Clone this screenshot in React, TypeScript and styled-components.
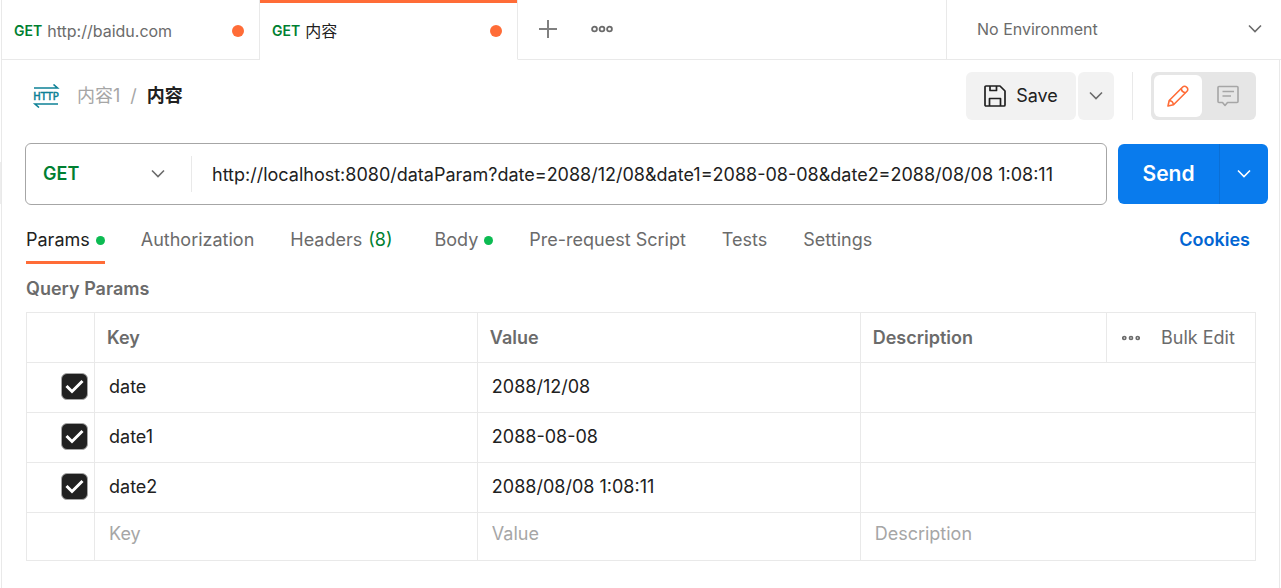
import React, { useState } from "react";
import styled, { createGlobalStyle } from "styled-components";

const line = "#e9e9e9";
const grey = "#6b6b6b";
const muted = "#a6a6a6";
const ink = "#212121";
const orange = "#ff6c37";
const green = "#007f31";
const fontStack = `Inter, "Noto Sans CJK SC", sans-serif`;

const GlobalStyle = createGlobalStyle`
  *, *::before, *::after { box-sizing: border-box; }
  body { margin: 0; background: #fff; color: ${ink}; font: 400 18px/24px ${fontStack}; }
  button, input, select { font: inherit; color: inherit; margin: 0; }
  button { border: 0; padding: 0; background: none; cursor: pointer; }
  svg { display: block; flex: none; }
`;

const Shell = styled.div`
  display: flex;
  min-height: 100vh;
`;

const Rail = styled.div`
  flex: none;
  width: 1px;
  padding-top: 162px;
`;

const RailThumb = styled.div`
  height: 42px;
  background: #ededed;
`;

const Workspace = styled.div`
  flex: 1;
  min-width: 0;
  display: flex;
  flex-direction: column;
  border-left: 1px solid ${line};
`;

const TabBar = styled.header`
  display: flex;
  height: 60px;
`;

const FileTab = styled.button<{ $active?: boolean }>`
  display: flex;
  align-items: center;
  gap: 5px;
  flex: none;
  width: 258px;
  padding: 2px 15px 0 12px;
  font-size: 16px;
  text-align: left;
  color: ${(p) => (p.$active ? ink : grey)};
  border-right: 1px solid ${line};
  border-bottom: 1px solid ${(p) => (p.$active ? "#fff" : line)};
  box-shadow: ${(p) => (p.$active ? `inset 0 3px 0 ${orange}` : "none")};
`;

const TabMethod = styled.span`
  font-size: 14px;
  font-weight: 600;
  color: ${green};
`;

const TabTitle = styled.span`
  flex: 1;
`;

const UnsavedDot = styled.span`
  width: 12px;
  height: 12px;
  border-radius: 50%;
  background: ${orange};
`;

const TabActions = styled.div`
  flex: 1;
  display: flex;
  align-items: center;
  gap: 34px;
  padding: 0 0 2px 21px;
  border-bottom: 1px solid ${line};
  color: ${grey};
`;

const SelectWrap = styled.label`
  display: grid;
  align-items: center;
  > * { grid-area: 1 / 1; }
  > svg { justify-self: end; pointer-events: none; }
`;

const PlainSelect = styled.select`
  width: 100%;
  height: 100%;
  border: 0;
  outline: 0;
  appearance: none;
  background: transparent;
`;

const Environment = styled(SelectWrap)`
  flex: none;
  width: 335px;
  padding: 0 19px 2px 30px;
  border-left: 1px solid ${line};
  border-bottom: 1px solid ${line};
  font-size: 16px;
  color: ${grey};
`;

const Request = styled.main`
  flex: 1;
  margin-right: 1px;
  border-right: 1px solid ${line};
`;

const TitleRow = styled.div`
  display: flex;
  align-items: center;
  padding: 12px 23px 0 30px;
`;

const Crumbs = styled.nav`
  flex: 1;
  display: flex;
  align-items: center;
  gap: 10px;
  padding-left: 17px;
  color: ${muted};
`;

const CrumbLink = styled.a`
  color: ${muted};
  text-decoration: none;
`;

const CrumbCurrent = styled.strong`
  font-weight: 700;
  color: ${ink};
`;

const SoftButton = styled.button<{ $w: number }>`
  display: flex;
  align-items: center;
  justify-content: center;
  gap: 10px;
  width: ${(p) => p.$w}px;
  height: 48px;
  margin-right: 2px;
  border-radius: 6px;
  background: #f2f2f2;
`;

const Divider = styled.span`
  width: 1px;
  height: 48px;
  margin: 0 18px 0 16px;
  background: ${line};
`;

const ModeSwitch = styled.div`
  display: flex;
  padding: 3px;
  border-radius: 6px;
  background: #e6e6e6;
`;

const ModeButton = styled.button<{ $on?: boolean }>`
  display: flex;
  align-items: center;
  justify-content: center;
  width: ${(p) => (p.$on ? 48 : 51)}px;
  height: 42px;
  border-radius: 6px;
  color: ${(p) => (p.$on ? orange : muted)};
  background: ${(p) => (p.$on ? "#fff" : "transparent")};
`;

const UrlRow = styled.form`
  display: flex;
  align-items: center;
  gap: 11px;
  padding: 23px 11px 0 23px;
`;

const UrlBox = styled.div`
  flex: 1;
  display: flex;
  align-items: center;
  height: 62px;
  border: 1px solid ${muted};
  border-radius: 6px;
`;

const MethodSelect = styled(SelectWrap)`
  width: 166px;
  height: 36px;
  padding: 0 26px 0 17px;
  border-right: 1px solid ${line};
  font-weight: 600;
  color: ${green};
`;

const UrlInput = styled.input`
  flex: 1;
  min-width: 0;
  height: 100%;
  padding: 0 20px;
  border: 0;
  outline: 0;
  background: transparent;
`;

const SendGroup = styled.div`
  display: flex;
  height: 60px;
  overflow: hidden;
  border-radius: 6px;
  background: #097bed;
  color: #fff;
`;

const SendButton = styled.button`
  width: 101px;
  font-size: 21px;
  font-weight: 600;
`;

const SendMore = styled.button`
  display: flex;
  align-items: center;
  justify-content: center;
  width: 49px;
  border-left: 1px solid #0a6fd6;
`;

const Sections = styled.div`
  display: flex;
  align-items: flex-start;
  gap: 36px;
  padding: 23px 29px 0 24px;
`;

const SectionTab = styled.button<{ $active?: boolean }>`
  display: flex;
  align-items: center;
  gap: 6px;
  height: 36px;
  padding-bottom: 12px;
  color: ${(p) => (p.$active ? ink : grey)};
  box-shadow: ${(p) => (p.$active ? `inset 0 -3px 0 ${orange}` : "none")};
`;

const Count = styled.span`
  padding-right: 6px;
  color: ${green};
`;

const StatusDot = styled.span`
  width: 9px;
  height: 9px;
  border-radius: 50%;
  background: #0cbb52;
`;

const CookiesLink = styled.a`
  margin-left: auto;
  font-weight: 600;
  color: #0265d2;
  text-decoration: none;
`;

const Heading = styled.h2`
  margin: 0;
  padding: 13px 24px 11px;
  font-size: 18px;
  font-weight: 600;
  line-height: 24px;
  color: ${grey};
`;

const TableWrap = styled.div`
  padding: 0 23px 0 24px;
`;

const Table = styled.table`
  width: 100%;
  table-layout: fixed;
  border-collapse: collapse;
`;

const Col = styled.col<{ $w?: string }>`
  width: ${(p) => p.$w ?? "auto"};
`;

const Th = styled.th`
  height: 50px;
  padding: 0 12px;
  border: 1px solid ${line};
  font-weight: 600;
  text-align: left;
  color: ${grey};
`;

const Td = styled.td`
  height: 50px;
  padding: 0 0 2px;
  border: 1px solid ${line};
`;

const BlankTd = styled(Td)`
  height: 48px;
  padding-bottom: 6px;
`;

const CellInput = styled.input`
  display: block;
  width: 100%;
  height: 24px;
  padding: 0 14px;
  border: 0;
  outline: 0;
  background: transparent;
  &::placeholder { color: ${muted}; opacity: 1; }
`;

const HeadActions = styled.div`
  display: flex;
  align-items: center;
  gap: 21px;
  padding-left: 3px;
  font-weight: 400;
  white-space: nowrap;
`;

const CheckLabel = styled.label`
  display: grid;
  place-items: center;
  width: 27px;
  margin: 0 6px 0 auto;
  > * { grid-area: 1 / 1; }
  > svg { pointer-events: none; }
`;

const CheckInput = styled.input`
  appearance: none;
  width: 27px;
  height: 27px;
  border: 1px solid ${muted};
  border-radius: 6px;
  background: #fff;
  &:checked { background: ${ink}; }
`;

const Chevron = ({ color = grey }: { color?: string }) => (
  <svg width="14" height="10" viewBox="0 0 14 10" fill="none" stroke={color} strokeWidth="1.6">
    <path d="M1 1.5 7 7.5 13 1.5" />
  </svg>
);

const Dots = () => (
  <svg width="22" height="8" viewBox="0 0 22 8" fill="none" stroke={grey} strokeWidth="1.8">
    <circle cx="3.500" cy="4" r="2.400" />
    <circle cx="11" cy="4" r="2.400" />
    <circle cx="18.500" cy="4" r="2.400" />
  </svg>
);

const SmallDots = () => (
  <svg width="18" height="6" viewBox="0 0 18 6" fill="none" stroke={grey} strokeWidth="1.7">
    <circle cx="2.300" cy="3" r="1.500" />
    <circle cx="9" cy="3" r="1.500" />
    <circle cx="15.700" cy="3" r="1.500" />
  </svg>
);

const PlusIcon = () => (
  <svg width="18" height="18" viewBox="0 0 18 18" stroke="#808080" strokeWidth="2">
    <path d="M9 0v18M0 9h18" />
  </svg>
);

const HttpIcon = () => (
  <svg width="28" height="24" viewBox="0 0 28 24" fill="none" stroke="#0e8196" strokeWidth="1.6">
    <path d="M2 4h23.500L21.500 .5" />
    <path d="M26 20H3l4 3.500" />
    <text
      x="14"
      y="16"
      textAnchor="middle"
      fontFamily="DejaVu Sans Condensed, DejaVu Sans, sans-serif"
      fontSize="11"
      fill="#0e8196"
      strokeWidth="0.5"
    >
      HTTP
    </text>
  </svg>
);

const SaveIcon = () => (
  <svg width="22" height="22" viewBox="0 0 22 22" fill="none" stroke={ink} strokeWidth="1.7" strokeLinejoin="round">
    <path d="M1 2a1 1 0 0 1 1-1h14l5 5v14a1 1 0 0 1-1 1H2a1 1 0 0 1-1-1z" />
    <path d="M6 1v4.500h6.500V1" />
    <path d="M5.500 21v-7.500h11V21" />
  </svg>
);

const PencilIcon = () => (
  <svg width="22" height="22" viewBox="0 0 22 22" fill="none" stroke="currentColor" strokeWidth="1.6" strokeLinejoin="round">
    <path d="M1 21 2.200 15.500 15.700 2a2.600 2.600 0 0 1 3.700 0l.6.6a2.600 2.600 0 0 1 0 3.700L6.500 19.800z" />
    <path d="M14.300 3.400c.2 2.700 1.600 4.100 4.300 4.300M2.200 15.500c2.300.3 4 2 4.300 4.300" />
  </svg>
);

const CommentIcon = () => (
  <svg width="22" height="22" viewBox="0 0 22 22" fill="none" stroke="currentColor" strokeWidth="1.6" strokeLinejoin="round">
    <path d="M2 1.500h18a1 1 0 0 1 1 1v14a1 1 0 0 1-1 1h-9.500L8 20.500l-2.500-3H2a1 1 0 0 1-1-1v-14a1 1 0 0 1 1-1z" />
    <path d="M5.500 6.500h11.500M5.500 11h8.500" />
  </svg>
);

const TickIcon = () => (
  <svg width="19" height="15" viewBox="0 0 19 15" fill="none" stroke="#fff" strokeWidth="3">
    <path d="M1.500 7 7 12.500 17.500 2" />
  </svg>
);

const rows = [
  { key: "date", value: "2088/12/08" },
  { key: "date1", value: "2088-08-08" },
  { key: "date2", value: "2088/08/08 1:08:11" },
];

function ParamRow({ name, value }: { name: string; value: string }) {
  const [checked, setChecked] = useState(true);
  return (
    <tr>
      <Td>
        <CheckLabel>
          <CheckInput
            type="checkbox"
            aria-label={`Use ${name}`}
            checked={checked}
            onChange={(e) => setChecked(e.target.checked)}
          />
          {checked && <TickIcon />}
        </CheckLabel>
      </Td>
      <Td><CellInput aria-label="Key" defaultValue={name} /></Td>
      <Td><CellInput aria-label="Value" defaultValue={value} /></Td>
      <Td colSpan={2}><CellInput aria-label="Description" /></Td>
    </tr>
  );
}

export default function App() {
  return (
    <>
      <GlobalStyle />
      <Shell>
        <Rail><RailThumb /></Rail>
        <Workspace>
          <TabBar>
            <FileTab>
              <TabMethod>GET</TabMethod>
              <TabTitle>http://baidu.com</TabTitle>
              <UnsavedDot />
            </FileTab>
            <FileTab $active>
              <TabMethod>GET</TabMethod>
              <TabTitle>内容</TabTitle>
              <UnsavedDot />
            </FileTab>
            <TabActions>
              <button aria-label="New tab"><PlusIcon /></button>
              <button aria-label="Tab options"><Dots /></button>
            </TabActions>
            <Environment>
              <PlainSelect aria-label="Environment">
                <option>No Environment</option>
              </PlainSelect>
              <Chevron />
            </Environment>
          </TabBar>

          <Request>
            <TitleRow>
              <HttpIcon />
              <Crumbs aria-label="Breadcrumb">
                <CrumbLink href="#collection">内容1</CrumbLink>
                <span>/</span>
                <CrumbCurrent>内容</CrumbCurrent>
              </Crumbs>
              <SoftButton $w={110}><SaveIcon />Save</SoftButton>
              <SoftButton $w={36} aria-label="Save options"><Chevron /></SoftButton>
              <Divider />
              <ModeSwitch>
                <ModeButton $on aria-label="Edit"><PencilIcon /></ModeButton>
                <ModeButton aria-label="Comments"><CommentIcon /></ModeButton>
              </ModeSwitch>
            </TitleRow>

            <UrlRow onSubmit={(e) => e.preventDefault()}>
              <UrlBox>
                <MethodSelect>
                  <PlainSelect aria-label="Method">
                    <option>GET</option>
                  </PlainSelect>
                  <Chevron />
                </MethodSelect>
                <UrlInput
                  aria-label="Request URL"
                  defaultValue="http://localhost:8080/dataParam?date=2088/12/08&date1=2088-08-08&date2=2088/08/08 1:08:11"
                />
              </UrlBox>
              <SendGroup>
                <SendButton type="submit">Send</SendButton>
                <SendMore type="button" aria-label="Send options"><Chevron color="#fff" /></SendMore>
              </SendGroup>
            </UrlRow>

            <Sections>
              <SectionTab $active>Params<StatusDot /></SectionTab>
              <SectionTab>Authorization</SectionTab>
              <SectionTab>Headers <Count>(8)</Count></SectionTab>
              <SectionTab>Body<StatusDot /></SectionTab>
              <SectionTab>Pre-request Script</SectionTab>
              <SectionTab>Tests</SectionTab>
              <SectionTab>Settings</SectionTab>
              <CookiesLink href="#cookies">Cookies</CookiesLink>
            </Sections>

            <Heading>Query Params</Heading>
            <TableWrap>
              <Table>
                <colgroup>
                  <Col $w="68px" />
                  <Col $w="31.15%" />
                  <Col $w="31.15%" />
                  <Col />
                  <Col $w="149px" />
                </colgroup>
                <thead>
                  <tr>
                    <Th aria-label="Enabled" />
                    <Th>Key</Th>
                    <Th>Value</Th>
                    <Th>Description</Th>
                    <Th>
                      <HeadActions>
                        <button aria-label="Table options"><SmallDots /></button>
                        <button>Bulk Edit</button>
                      </HeadActions>
                    </Th>
                  </tr>
                </thead>
                <tbody>
                  {rows.map((r) => (
                    <ParamRow key={r.key} name={r.key} value={r.value} />
                  ))}
                  <tr>
                    <BlankTd />
                    <BlankTd><CellInput aria-label="New key" placeholder="Key" /></BlankTd>
                    <BlankTd><CellInput aria-label="New value" placeholder="Value" /></BlankTd>
                    <BlankTd colSpan={2}><CellInput aria-label="New description" placeholder="Description" /></BlankTd>
                  </tr>
                </tbody>
              </Table>
            </TableWrap>
          </Request>
        </Workspace>
      </Shell>
    </>
  );
}
